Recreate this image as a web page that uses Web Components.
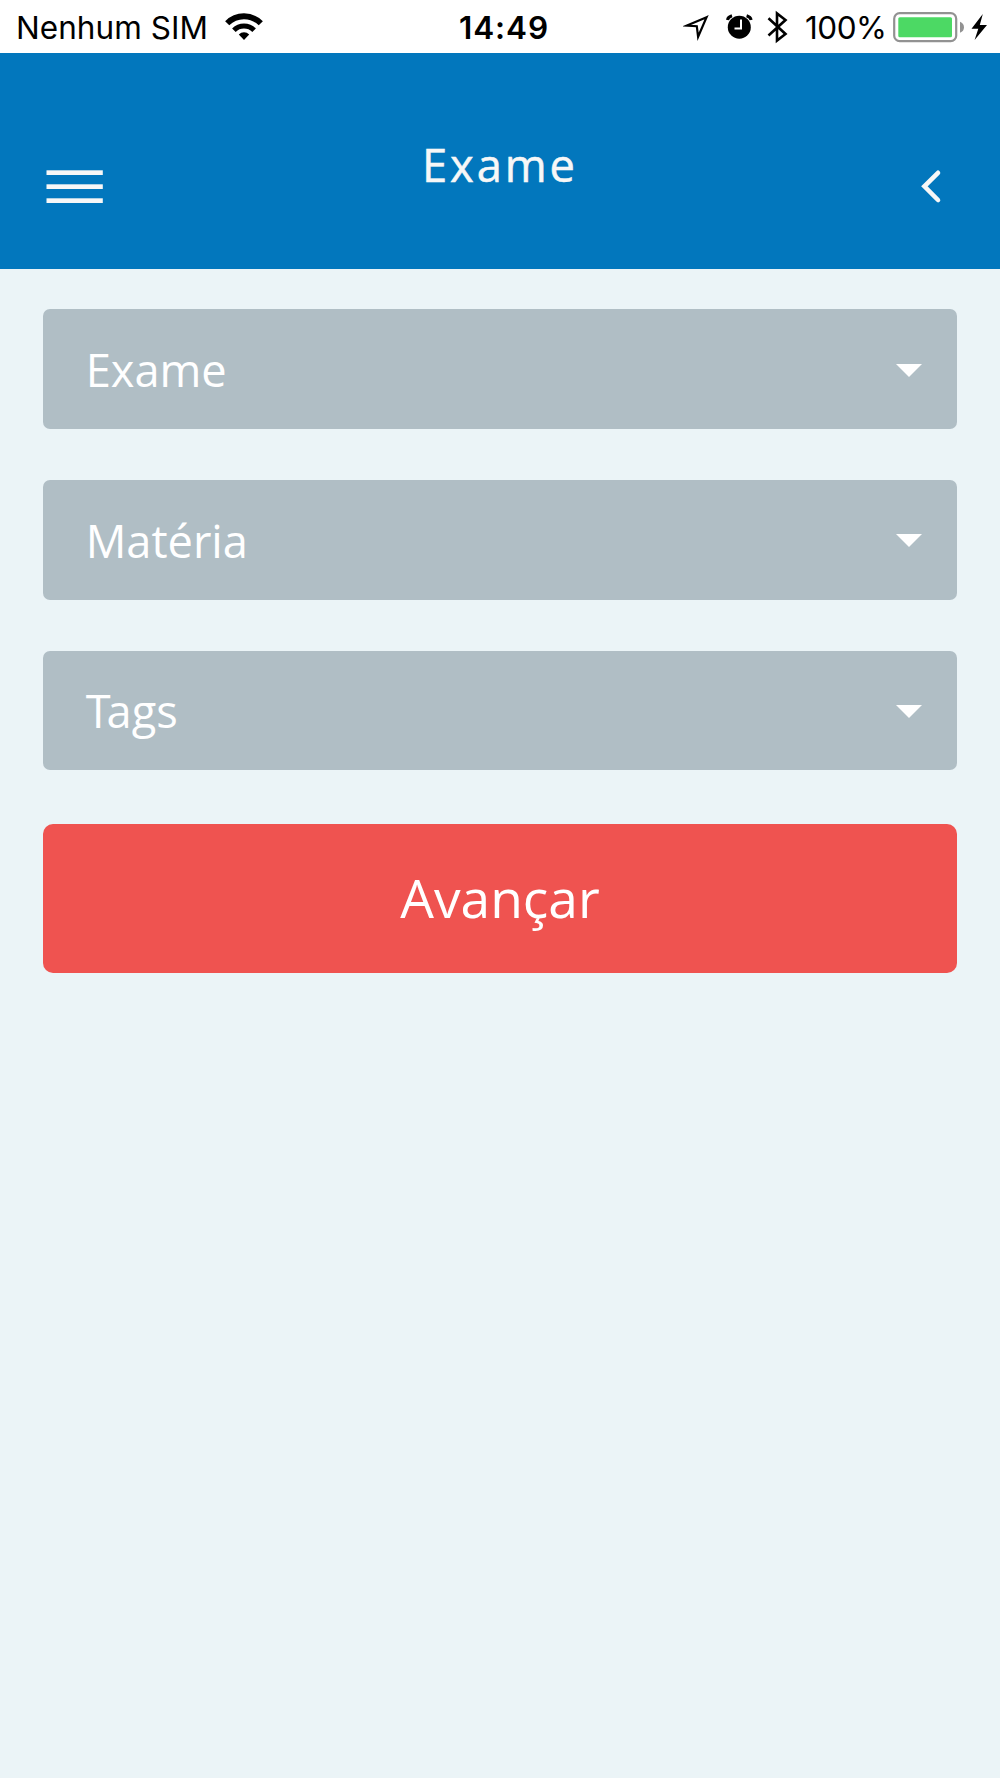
<!DOCTYPE html>
<html lang="pt-BR">
<head>
<meta charset="utf-8">
<title>Exame</title>
<style>
  html, body {
    margin: 0;
    height: 100%;
    background: #ebf4f7;
  }
</style>
</head>
<body>
<exam-app></exam-app>
<script>
class StatusBar extends HTMLElement {
  constructor() {
    super();
    this.shadow = this.attachShadow({ mode: "open" });
    this.shadow.innerHTML = `
      <style>
        :host {
          display: grid;
          grid-template-columns: 1fr auto 1fr;
          align-items: center;
          height: 53.33px;
          box-sizing: border-box;
          padding: 0 13px 0 16px;
          background: white;
          color: black;
          font: 400 31.5px/51px Inter, sans-serif;
          white-space: nowrap;
        }

        .left, .right {
          display: flex;
          align-items: center;
        }

        .right {
          justify-content: flex-end;
        }

        .carrier, .time, .level {
          padding-top: 2px;
        }

        .carrier {
          width: 209px;
          letter-spacing: 0.05px;
        }

        .time {
          font-weight: 600;
          letter-spacing: 0.9px;
          padding-left: 5px;
        }

        .level {
          width: 88px;
          letter-spacing: -0.5px;
        }

        svg {
          display: block;
          height: 53px;
        }
      </style>
      <div class="left">
        <span class="carrier">${this.getAttribute("carrier")}</span>
        <svg width="38" height="53" viewBox="225 0 38 53" fill="none" stroke="#000">
          <path d="M227.2 23.3a23.6 23.6 0 0 1 33.6 0" stroke-width="5.8"/>
          <path d="M233.9 30.2a14.2 14.2 0 0 1 20.2 0" stroke-width="5"/>
          <path d="M244 40l-5.2-5.6a7.6 7.6 0 0 1 10.4 0z" fill="#000" stroke="none"/>
        </svg>
      </div>
      <div class="time">${this.getAttribute("time")}</div>
      <div class="right">
        <svg width="122" height="53" viewBox="683 0 122 53">
          <path d="M706.600 17.200L687 25.600l9.800 0.600 1.300 10.600z" fill="none" stroke="#000" stroke-width="2.200" stroke-miterlimit="8"/>
          <circle cx="739.3" cy="27.2" r="11.5"/>
          <path d="M727.500 20q0.500-3 4.500-4.200M751.100 20q-0.500-3-4.500-4.200" fill="none" stroke="#000" stroke-width="3"/>
          <path d="M741 19.500v9h-6.500" fill="none" stroke="#fff" stroke-width="2"/>
          <path d="M768.500 18.300l17 15.700-8.500 6.500v-27l8.500 6.500-17 15.500" fill="none" stroke="#000" stroke-width="2.600"/>
        </svg>
        <span class="level">${this.getAttribute("level")}</span>
        <svg width="94" height="53" viewBox="893 0 94 53">
          <rect x="894.200" y="13.200" width="62" height="28" rx="5.500" fill="#fff" stroke="#929292" stroke-width="2.200"/>
          <rect x="898.300" y="17.300" width="53.700" height="20" rx="1.500" fill="#4cd964"/>
          <path d="M960 21.700q4 1.500 4 5.500t-4 5.500z" fill="#929292"/>
          <path d="M982.800 14L971.500 28.700h6.800l-3.700 11.300L987 25h-7.200z"/>
        </svg>
      </div>
    `;
  }
}

class AppHeader extends HTMLElement {
  constructor() {
    super();
    this.shadow = this.attachShadow({ mode: "open" });
    this.shadow.innerHTML = `
      <style>
        :host {
          display: grid;
          grid-template-columns: 57px 1fr 57px;
          height: 216px;
          box-sizing: border-box;
          padding: 0 46px;
          background: #0277bd;
          color: #f7f7f7;
        }

        h1 {
          margin: 81px 0 0;
          font: 400 45.3px/62px "Open Sans", sans-serif;
          letter-spacing: 2.9px;
          text-align: center;
          -webkit-text-stroke: 0.5px;
        }

        svg {
          display: block;
          margin-top: 112px;
        }

        .back {
          justify-self: end;
          margin-right: -6px;
        }
      </style>
      <svg width="57" height="40" viewBox="0 0 57 40" fill="#f7f7f7">
        <rect x="0.500" y="5.300" width="56.300" height="4.700"/>
        <rect x="0.500" y="19.300" width="56.300" height="4.700"/>
        <rect x="0.500" y="33.300" width="56.300" height="4.700"/>
      </svg>
      <h1><slot></slot></h1>
      <svg class="back" width="40" height="40" viewBox="920 165 40 40" fill="none" stroke="#f7f7f7" stroke-width="4.600" stroke-linecap="round">
        <path d="M938 172.800L924.400 186.300l13.600 13.700"/>
      </svg>
    `;
  }
}

class SelectField extends HTMLElement {
  constructor() {
    super();
    this.shadow = this.attachShadow({ mode: "open" });
    this.shadow.innerHTML = `
      <style>
        :host {
          display: flex;
          align-items: center;
          justify-content: space-between;
          height: 119.67px;
          box-sizing: border-box;
          padding: 2px 35px 0 43px;
          border-radius: 7px;
          background: #b0bec5;
          color: white;
          font: 400 45.2px/62px "Open Sans", sans-serif;
        }

        /* tightens the gap that a leading T leaves */
        :host([label^="T"]) .label::first-letter {
          letter-spacing: -4px;
        }

        .caret {
          border: 13.33px solid transparent;
          border-top-color: white;
          border-bottom: none;
        }
      </style>
      <div class="label">${this.getAttribute("label")}</div>
      <span class="caret"></span>
    `;
  }
}

class SubmitButton extends HTMLElement {
  constructor() {
    super();
    this.shadow = this.attachShadow({ mode: "open" });
    this.shadow.innerHTML = `
      <style>
        :host {
          display: block;
        }

        button {
          display: block;
          width: 100%;
          height: 149.33px;
          margin: 0;
          padding: 0 0 1px;
          border: none;
          border-radius: 10px;
          background: #ef5350;
          color: white;
          font: 400 53.3px/72px "Open Sans", sans-serif;
        }
      </style>
      <button type="button"><slot></slot></button>
    `;
  }
}

class ExamApp extends HTMLElement {
  constructor() {
    super();
    this.shadow = this.attachShadow({ mode: "open" });
    this.fields = ["Exame", "Matéria", "Tags"];
    this.shadow.innerHTML = `
      <style>
        :host {
          display: block;
          min-height: 100%;
          background: #ebf4f7;
        }

        form {
          display: flex;
          flex-direction: column;
          gap: 51px;
          padding: 40px 42.67px;
        }

        submit-button {
          margin-top: 2.5px;
        }
      </style>
      <status-bar carrier="Nenhum SIM" time="14:49" level="100%"></status-bar>
      <app-header>Exame</app-header>
      <form>
        ${this.fields.map((field) => `<select-field label="${field}"></select-field>`).join("")}
        <submit-button>Avançar</submit-button>
      </form>
    `;
  }
}

window.customElements.define("status-bar", StatusBar);
window.customElements.define("app-header", AppHeader);
window.customElements.define("select-field", SelectField);
window.customElements.define("submit-button", SubmitButton);
window.customElements.define("exam-app", ExamApp);
</script>
</body>
</html>
